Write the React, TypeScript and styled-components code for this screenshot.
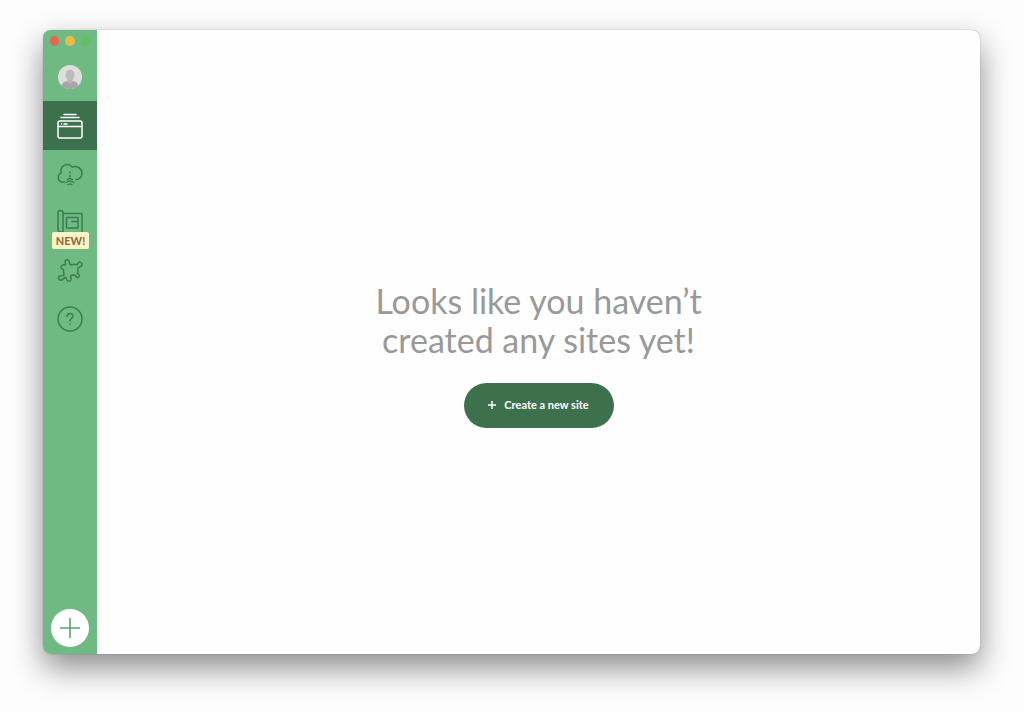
import React from "react";
import styled, { createGlobalStyle } from "styled-components";

const GlobalStyle = createGlobalStyle`
  *, *::before, *::after { box-sizing: border-box; }
  body { margin: 0; background: #fdfdfd; font-family: Lato, "Open Sans", sans-serif; }
`;

const Desktop = styled.div`
  display: flex;
  min-height: 100vh;
  padding: 30px 44px 58px 43px;
`;

const AppWindow = styled.div`
  display: flex;
  flex: 1;
  border-radius: 8px;
  overflow: hidden;
  background: #fefefe;
  box-shadow: 0 0 1px rgba(0, 0, 0, 0.5), 0 14px 32px rgba(0, 0, 0, 0.45);
`;

const Sidebar = styled.aside`
  display: flex;
  flex-direction: column;
  align-items: center;
  width: 54px;
  padding-bottom: 7px;
  background: #6fb982;
`;

const WindowControls = styled.div`
  display: flex;
  align-self: stretch;
  gap: 6px;
  padding: 6px 7px 0;
`;

const ControlDot = styled.button<{ $color: string }>`
  width: 10px;
  height: 10px;
  padding: 0;
  border: 0;
  border-radius: 50%;
  background: ${(p) => p.$color};
`;

const Avatar = styled.button`
  width: 24px;
  height: 24px;
  margin: 19px 0 12px;
  padding: 0;
  border: 0;
  border-radius: 50%;
  overflow: hidden;
  background: #dedede;
  svg { display: block; }
`;

const Nav = styled.nav`
  display: flex;
  flex-direction: column;
  align-self: stretch;
`;

const NavItem = styled.a<{ $active?: boolean }>`
  position: relative;
  display: flex;
  align-items: center;
  justify-content: center;
  height: ${(p) => (p.$active ? 49 : 48)}px;
  color: ${(p) => (p.$active ? "#ffffff" : "#3a7d4e")};
  background: ${(p) => (p.$active ? "#3d704d" : "transparent")};
`;

const NewBadge = styled.span`
  position: absolute;
  left: 9px;
  right: 8px;
  bottom: -3px;
  border-radius: 2px;
  background: #fbf3c6;
  color: #8f6437;
  font: 700 11px/17px Lato, sans-serif;
  text-align: center;
`;

const AddButton = styled.button`
  display: flex;
  align-items: center;
  justify-content: center;
  width: 38px;
  height: 38px;
  margin-top: auto;
  padding: 0;
  border: 0;
  border-radius: 50%;
  background: #ffffff;
  color: #58a56e;
`;

const Main = styled.main`
  display: flex;
  flex: 1;
  flex-direction: column;
  align-items: center;
  justify-content: center;
  gap: 24px;
  padding-top: 24px;
`;

const Heading = styled.h1`
  margin: 0;
  color: #999999;
  font: 400 34px/39px Lato, sans-serif;
  text-align: center;
`;

const CreateButton = styled.button`
  display: flex;
  align-items: center;
  justify-content: center;
  gap: 8px;
  width: 150px;
  height: 45px;
  padding: 0;
  border: 0;
  border-radius: 23px;
  background: #3d704d;
  color: #ffffff;
  font: 700 11px/16px Lato, sans-serif;
`;

const Icon = ({ children }: { children: React.ReactNode }) => (
  <svg width="28" height="28" viewBox="0 0 28 28" fill="none" stroke="currentColor"
    strokeWidth="1.5" strokeLinecap="round" strokeLinejoin="round" aria-hidden="true">
    {children}
  </svg>
);

export default function App() {
  return (
    <>
      <GlobalStyle />
      <Desktop>
        <AppWindow>
          <Sidebar>
            <WindowControls>
              <ControlDot $color="#e96356" aria-label="Close" />
              <ControlDot $color="#edb944" aria-label="Minimize" />
              <ControlDot $color="#61c063" aria-label="Zoom" />
            </WindowControls>
            <Avatar aria-label="Account">
              <svg width="24" height="24" viewBox="0 0 24 24" aria-hidden="true">
                <path d="M4 24v-3c0-4 3-5 8-5s8 1 8 5v3Z" fill="#aaa3a8" />
                <path d="M9.500 14h5v3.500q-2.500 2-5 0Z" fill="#b9b5b8" />
                <ellipse cx="12" cy="10" rx="4.500" ry="5.500" fill="#bdbabc" />
              </svg>
            </Avatar>
            <Nav>
              <NavItem href="#sites" $active aria-label="Sites">
                <Icon>
                  <rect x="2" y="9" width="24" height="17" rx="2" />
                  <path d="M2.500 14.500h23M5.500 12h.1M8 12h3M5 5.500h18M8 2.500h12" />
                </Icon>
              </NavItem>
              <NavItem href="#connect" aria-label="Connect">
                <Icon>
                  <path d="M8.500 22H6.800C3.800 22 2.300 20 2.300 17.500c0-2 1-3.700 2.800-4.600C4.200 8.500 7 4.500 11 4.500c2.300 0 4 .8 5.200 2.500C21.500 5.500 26 8.500 26 13c0 3.500-2 6-6 6.700" />
                  <path d="M14 12v1M14 15.500v1M11.500 19.500q2.500-2 5 0M10 22.500q4-3 8 0M12 24.500q2-1 4 0" strokeWidth="1.300" />
                </Icon>
              </NavItem>
              <NavItem href="#blueprints" aria-label="Blueprints, new">
                <Icon>
                  <path d="M7 24H4.500Q2 24 2 21.500V5q0-2.500 2.500-2.500T7 5v19M7 5.500h19v20H7M10.500 20V9.500H22V20ZM16 13.500h6" />
                </Icon>
                <NewBadge>NEW!</NewBadge>
              </NavItem>
              <NavItem href="#addons" aria-label="Add-ons">
                <Icon>
                  <path d="M6 9.500C7.500 8 8.800 9.500 9.500 8.500 10.200 7.300 8.300 6 9.500 4.500 11 3 13.500 4.500 13.500 6.500 13.500 8 14.500 8.800 15.500 8.800 17.300 9 18 7.500 19.800 8.500 21 9.200 21.500 8.500 22 7.200 23 5 26.500 6.500 26 9 25.500 11.200 22.500 10.800 21.800 12.200 21 14 23 15 21.500 16.500 20.800 17.500 22 17.700 22.800 18.300 24.200 19.500 23 22 21 21.500 19.300 21 19.500 18.500 18 19 16.800 19.500 15.500 18.800 14.700 19.700 13.800 20.700 15.800 22 15 23.800 14 26 10.700 25.500 10.500 23.300 10.300 21.800 9.800 21 8.800 21.500 7.500 22.300 6.500 24.500 4.500 24.300 2.300 24 1.800 21.300 3.500 20.200 5 19.200 6.800 20.500 8 18.800 8.800 17.500 7 16.800 7.500 15 8 13.500 7 13 6 12.700 4.500 12 4.500 10.500 6 9.500Z" />
                </Icon>
              </NavItem>
              <NavItem href="#help" aria-label="Help">
                <Icon>
                  <circle cx="14" cy="15" r="12" />
                  <path d="M11 12.500c0-4 6-4 6-.5 0 2.500-3 2-3 5M14 20v.2" />
                </Icon>
              </NavItem>
            </Nav>
            <AddButton aria-label="Add site">
              <svg width="20" height="20" viewBox="0 0 20 20" stroke="currentColor" strokeWidth="1.600" aria-hidden="true">
                <path d="M10 0v20M0 10h20" />
              </svg>
            </AddButton>
          </Sidebar>
          <Main>
            <Heading>Looks like you haven’t<br />created any sites yet!</Heading>
            <CreateButton>
              <svg width="8" height="8" viewBox="0 0 8 8" stroke="currentColor" strokeWidth="1.500" aria-hidden="true">
                <path d="M4 0v8M0 4h8" />
              </svg>
              Create a new site
            </CreateButton>
          </Main>
        </AppWindow>
      </Desktop>
    </>
  );
}
